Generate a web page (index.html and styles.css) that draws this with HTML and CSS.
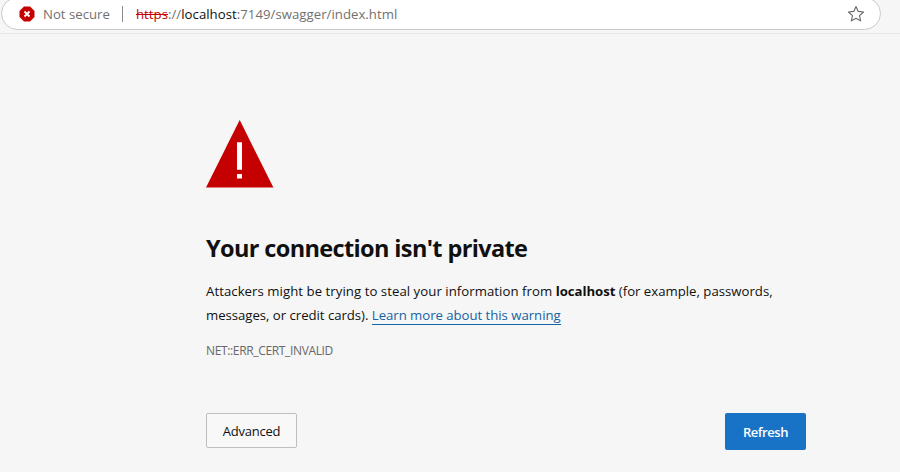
FILE: index.html
```
<!DOCTYPE html>
<html lang="en"><head><meta charset="utf-8"><title>Privacy error</title><link rel="stylesheet" href="styles.css"></head>
<body>
<header class="toolbar">
<div class="address">
<svg class="danger" viewBox="0 0 16 16"><path fill="#c50000" d="M5 .5h6L15.500 5v6L11 15.500H5L.5 11V5z"/><path d="m5.500 5.500 5 5m0-5-5 5" stroke="#fff" stroke-width="1.900"/></svg>
<span class="status">Not secure</span><span class="divider"></span>
<span class="url"><span class="scheme">https</span>://<span class="host">localhost</span>:7149/swagger/index.html</span>
<svg class="star" viewBox="0 0 18 18"><path d="m9 1.500 2.200 4.900 5.300.6-4 3.600 1.100 5.300L9 13.200l-4.600 2.700 1.100-5.300-4-3.600 5.300-.6z" fill="none" stroke="#666" stroke-width="1.100" stroke-linejoin="round"/></svg>
</div>
</header>
<main class="content">
<svg class="warning" viewBox="0 0 68 68"><path fill="#c50000" d="M33.700 0 67.400 67.500H0z"/><path fill="#fff" d="M31 22.300h5v27.400h-5zM31 54h5v4.500h-5z"/></svg>
<h1>Your connection isn't private</h1>
<p class="message"><span class="line"><span class="lead">Attackers might be trying to steal your information from </span><strong>localhost</strong> (for example, passwords,</span><span class="line second">messages, or credit cards). <a href="#">Learn more about this warning</a></span></p>
<p class="code">NET::ERR_CERT_INVALID</p>
<div class="actions"><button class="secondary">Advanced</button><button class="primary">Refresh</button></div>
</main>
</body></html>
```
FILE: styles.css
```
* { box-sizing: border-box; }
body { margin: 0; height: 472px; overflow: hidden; background: #f6f6f6; font-family: "Open Sans", "Noto Sans", sans-serif; color: #101010; }
.toolbar { display: flex; align-items: flex-start; height: 34px; border-bottom: 1px solid #e9e9e9; }
.address { display: flex; align-items: center; width: 880px; height: 33px; margin: -3px 0 0 1px; padding: 2px 15px 2px 17px; background: #fff; border: 1px solid #cacaca; border-radius: 17px; font-size: 13.2px; color: #717171; white-space: nowrap; }
.danger { width: 16px; height: 16px; }
.status { width: 67px; margin-left: 8px; }
.divider { width: 1px; height: 16px; margin: 0 13px 0 12px; background: #8a8a8a; }
.url { letter-spacing: .03px; }
.scheme { color: #c50000; text-decoration: line-through; }
.host { color: #101010; }
.star { width: 18px; height: 18px; margin-left: auto; }
.content { width: 600px; margin: 86px 0 0 206px; }
.warning { display: block; width: 68px; height: 68px; }
h1 { margin: 43px 0 0; font-size: 23.5px; line-height: 34px; font-weight: 700; letter-spacing: -.63px; white-space: nowrap; }
.message { margin: 14px 0 0; font-size: 13.2px; line-height: 24px; }
.line { display: block; white-space: nowrap; }
.lead { letter-spacing: .05px; }
.line strong { letter-spacing: -.05px; }
.second { letter-spacing: -.035px; }
a { color: #1463a5; text-decoration: none; border-bottom: 1px solid #1463a5; }
.code { margin: 14px 0 0; font-size: 12px; line-height: 20px; letter-spacing: -.35px; color: #686868; }
.actions { display: flex; justify-content: space-between; margin-top: 52px; }
button { font: 13px "Open Sans", sans-serif; border-radius: 2px; padding: 0; }
.secondary { width: 91px; height: 35px; border: 1px solid #bebebe; background: #f8f8f8; color: #101010; letter-spacing: -.25px; }
.primary { width: 81px; height: 37px; border: 0; background: #1872c6; color: #fff; font-weight: 600; letter-spacing: -.45px; }
```
